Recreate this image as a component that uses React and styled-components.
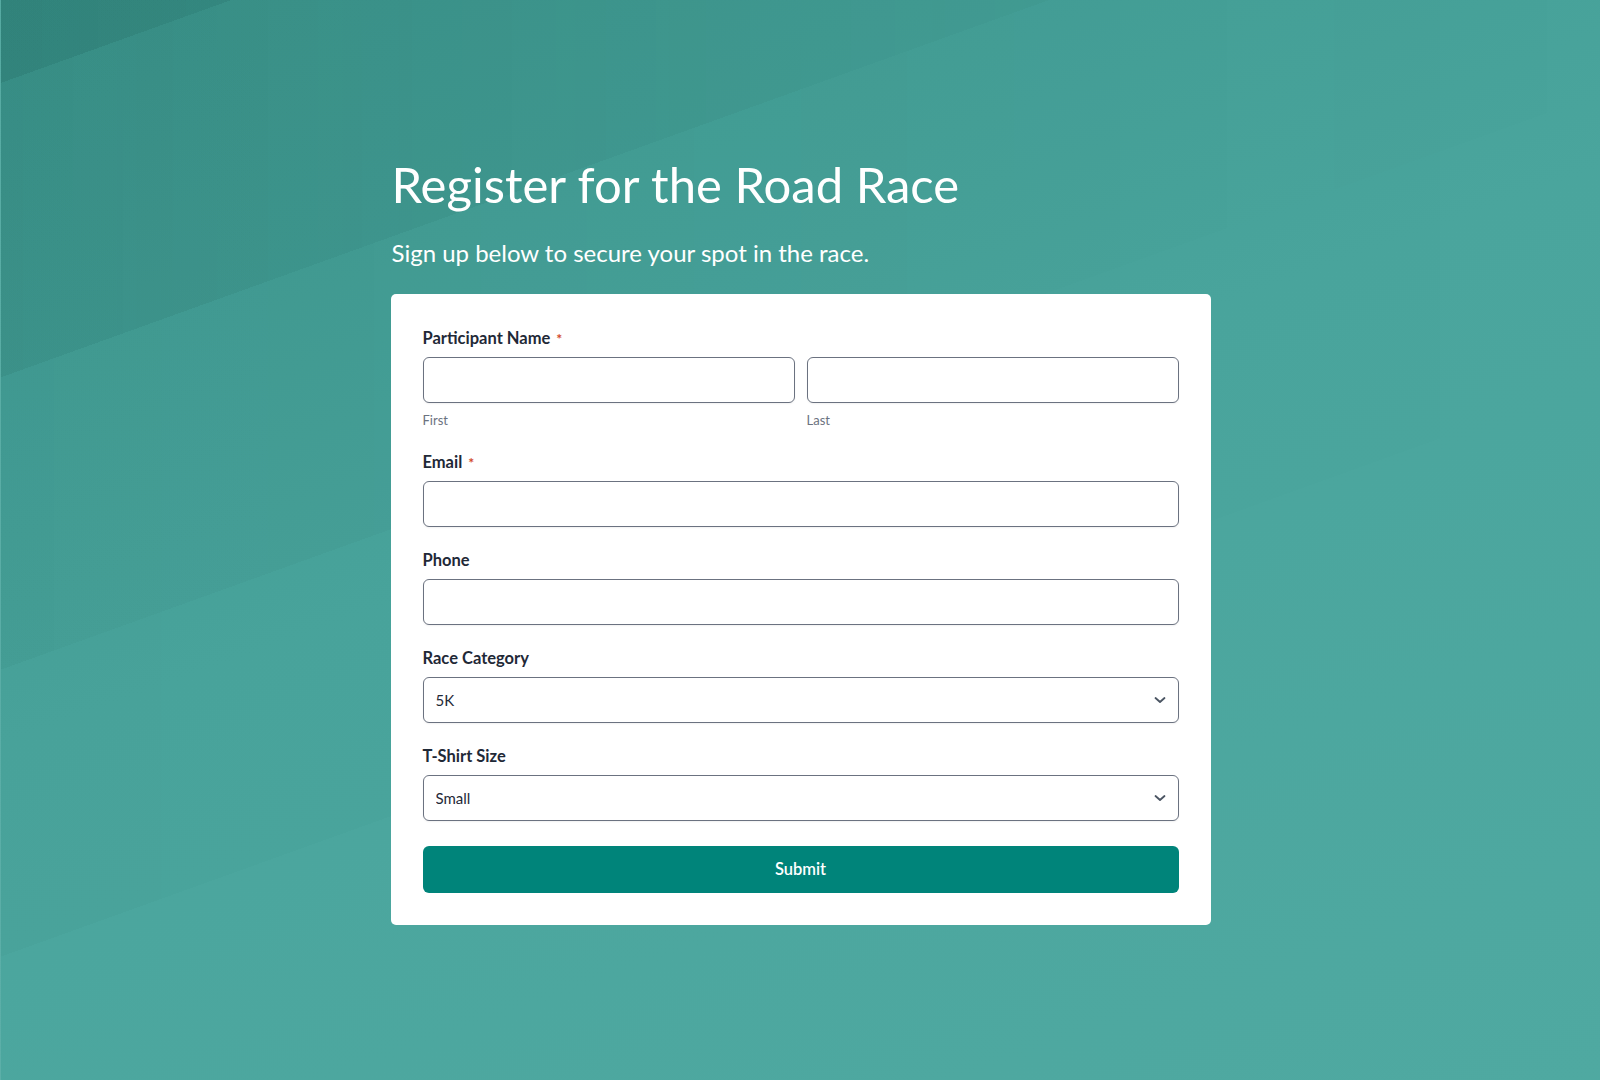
import React from "react";
import styled, { createGlobalStyle } from "styled-components";

const GlobalStyle = createGlobalStyle`
  html, body { margin: 0; padding: 0; }
  body { font-family: Lato, "Noto Sans", sans-serif; }
  * { box-sizing: border-box; }
`;

const Page = styled.div`
  position: relative;
  min-height: 100vh;
  width: 100%;
  padding-top: 155px;
  padding-bottom: 60px;
  background: linear-gradient(160.2deg, #3f9a91 0%, #4aa59d 45%, #4fa9a1 100%);
  border-left: 1px solid rgba(255, 255, 255, 0.08);
  overflow: hidden;

  &::before {
    content: "";
    position: absolute;
    inset: 0;
    pointer-events: none;
    background:
      linear-gradient(160.2deg, rgba(0, 50, 44, 0.1) 0 78px, transparent 78px),
      linear-gradient(160.2deg, rgba(0, 50, 44, 0.075) 0 355px, transparent 355px),
      linear-gradient(160.2deg, rgba(0, 50, 44, 0.04) 0 630px, transparent 630px),
      linear-gradient(160.2deg, rgba(0, 50, 44, 0.02) 0 900px, transparent 900px);
    -webkit-mask-image: linear-gradient(to right, #000 0%, rgba(0, 0, 0, 0) 100%);
    mask-image: linear-gradient(to right, #000 0%, rgba(0, 0, 0, 0) 100%);
  }
`;

const Container = styled.main`
  position: relative;
  width: 820px;
  margin: 0 auto;
`;

const Title = styled.h1`
  margin: 0 0 25px 1px;
  font-family: Lato, "Noto Sans", sans-serif;
  font-weight: 400;
  font-size: 49px;
  line-height: 1.2;
  color: #ffffff;
`;

const Subtitle = styled.p`
  margin: 0 0 26px 1px;
  font-family: Lato, "Noto Sans", sans-serif;
  font-weight: 400;
  font-size: 24px;
  line-height: 1.2;
  color: #ffffff;
`;

const Card = styled.form`
  background: #ffffff;
  border-radius: 5px;
  padding: 33px 32px 32px;
  display: flex;
  flex-direction: column;
  gap: 22px;
`;

const Field = styled.div`
  display: flex;
  flex-direction: column;
`;

const Label = styled.label`
  display: block;
  height: 20px;
  padding-top: 1px;
  font-size: 16.5px;
  line-height: 20px;
  font-weight: 700;
  color: #1f2937;
  margin-bottom: 10px;
`;

const Required = styled.span`
  display: inline-block;
  color: #d2482a;
  font-size: 14px;
  line-height: 0;
  margin-left: 6px;
  font-weight: 700;
`;

const NameRow = styled.div`
  display: grid;
  grid-template-columns: 1fr 1fr;
  column-gap: 12px;
`;

const SubField = styled.div`
  display: flex;
  flex-direction: column;
`;

const SubLabel = styled.span`
  margin-top: 9px;
  font-size: 13px;
  line-height: 17px;
  color: #6b7280;
`;

const Input = styled.input`
  width: 100%;
  height: 46px;
  border: 1px solid #6b7280;
  border-radius: 6px;
  background: #fff;
  box-shadow: 0 1px 2px rgba(0, 0, 0, 0.06);
  padding: 0 13px;
  font-family: Lato, "Noto Sans", sans-serif;
  font-size: 15px;
  color: #1f2937;
  outline: none;
`;

const SelectWrap = styled.div`
  position: relative;
`;

const Select = styled.select`
  width: 100%;
  height: 46px;
  border: 1px solid #6b7280;
  border-radius: 6px;
  background: #fff;
  box-shadow: 0 1px 2px rgba(0, 0, 0, 0.06);
  padding: 0 40px 0 12px;
  font-family: Lato, "Noto Sans", sans-serif;
  font-size: 15px;
  color: #1f2937;
  appearance: none;
  -webkit-appearance: none;
  outline: none;
`;

const Chevron = styled.svg`
  position: absolute;
  right: 13px;
  top: 50%;
  width: 12px;
  height: 12px;
  margin-top: -6px;
  pointer-events: none;
`;

const SubmitButton = styled.button`
  margin-top: 3px;
  height: 47px;
  width: 100%;
  border: none;
  border-radius: 6px;
  background: #00847a;
  color: #ffffff;
  font-family: Lato, "Noto Sans", sans-serif;
  font-size: 16.5px;
  font-weight: 600;
  cursor: pointer;
`;

function SelectField({ label, options }) {
  return (
    <Field>
      <Label>{label}</Label>
      <SelectWrap>
        <Select defaultValue={options[0]}>
          {options.map((o) => (
            <option key={o}>{o}</option>
          ))}
        </Select>
        <Chevron viewBox="0 0 12 12" fill="none">
          <polyline
            points="1.5,4 6,8 10.5,4"
            stroke="#4b5563"
            strokeWidth="1.8"
            strokeLinecap="round"
            strokeLinejoin="round"
          />
        </Chevron>
      </SelectWrap>
    </Field>
  );
}

export default function App() {
  return (
    <>
      <GlobalStyle />
      <Page>
        <Container>
          <Title>Register for the Road Race</Title>
          <Subtitle>Sign up below to secure your spot in the race.</Subtitle>
          <Card onSubmit={(e) => e.preventDefault()}>
            <Field>
              <Label>
                Participant Name<Required>*</Required>
              </Label>
              <NameRow>
                <SubField>
                  <Input type="text" />
                  <SubLabel>First</SubLabel>
                </SubField>
                <SubField>
                  <Input type="text" />
                  <SubLabel>Last</SubLabel>
                </SubField>
              </NameRow>
            </Field>
            <Field>
              <Label>
                Email<Required>*</Required>
              </Label>
              <Input type="email" />
            </Field>
            <Field>
              <Label>Phone</Label>
              <Input type="tel" />
            </Field>
            <SelectField label="Race Category" options={["5K", "10K", "Half Marathon"]} />
            <SelectField label="T-Shirt Size" options={["Small", "Medium", "Large", "X-Large"]} />
            <SubmitButton type="submit">Submit</SubmitButton>
          </Card>
        </Container>
      </Page>
    </>
  );
}
